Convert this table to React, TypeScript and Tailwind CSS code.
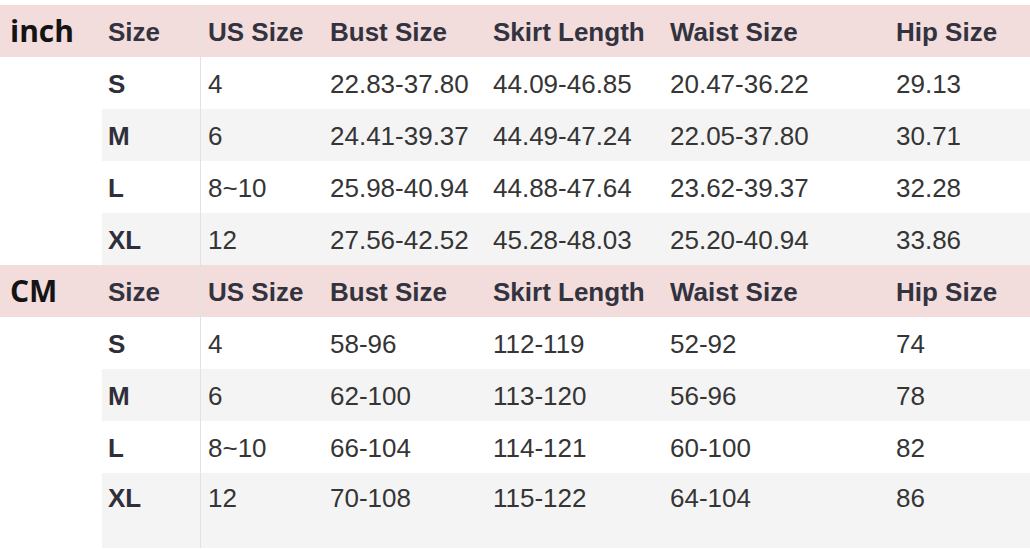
const headers = ['Size', 'US Size', 'Bust Size', 'Skirt Length', 'Waist Size', 'Hip Size'];

const inchRows = [
  ['S', '4', '22.83-37.80', '44.09-46.85', '20.47-36.22', '29.13'],
  ['M', '6', '24.41-39.37', '44.49-47.24', '22.05-37.80', '30.71'],
  ['L', '8~10', '25.98-40.94', '44.88-47.64', '23.62-39.37', '32.28'],
  ['XL', '12', '27.56-42.52', '45.28-48.03', '25.20-40.94', '33.86'],
];

const cmRows = [
  ['S', '4', '58-96', '112-119', '52-92', '74'],
  ['M', '6', '62-100', '113-120', '56-96', '78'],
  ['L', '8~10', '66-104', '114-121', '60-100', '82'],
  ['XL', '12', '70-108', '115-122', '64-104', '86'],
];

const grid = 'grid grid-cols-[102px_98px_124px_163px_177px_226px_1fr]';

function cellClass(i: number) {
  return i === 1 ? 'pl-[7px] border-l border-[#e2e2e2]' : 'pl-[6px]';
}

function Section({ unit, rows, last }: { unit: string; rows: string[][]; last?: boolean }) {
  return (
    <>
      <div className={`${grid} h-[52px] bg-[#f2dcdc]`}>
        <div className="flex items-center pl-[10px] font-['Open_Sans',sans-serif] text-[30px] font-bold text-[#141414]">
          {unit}
        </div>
        {headers.map((h, i) => (
          <div
            key={h}
            className={`flex items-center pt-[2px] text-[26px] font-bold text-[#33333f] ${cellClass(i)}`}
          >
            {h}
          </div>
        ))}
      </div>
      {rows.map((row, r) => {
        const tall = last && r === rows.length - 1;
        return (
          <div key={row[0]} className={`${grid} ${tall ? 'h-[75px]' : 'h-[52px]'}`}>
            <div />
            {row.map((v, i) => (
              <div
                key={i}
                className={`flex ${tall ? 'items-start pt-[12px]' : 'items-center pt-[2px]'} text-[26px] ${
                  r % 2 === 1 ? 'bg-[#f4f4f4]' : 'bg-white'
                } ${i === 0 ? 'font-bold text-[#2f2f3a]' : 'text-[#353535]'} ${cellClass(i)}`}
              >
                {v}
              </div>
            ))}
          </div>
        );
      })}
    </>
  );
}

export default function App() {
  return (
    <div className="h-[550px] w-[1030px] overflow-hidden bg-white pt-[5px] font-['Liberation_Sans',Arial,sans-serif] leading-none">
      <Section unit="inch" rows={inchRows} />
      <Section unit="CM" rows={cmRows} last />
    </div>
  );
}
